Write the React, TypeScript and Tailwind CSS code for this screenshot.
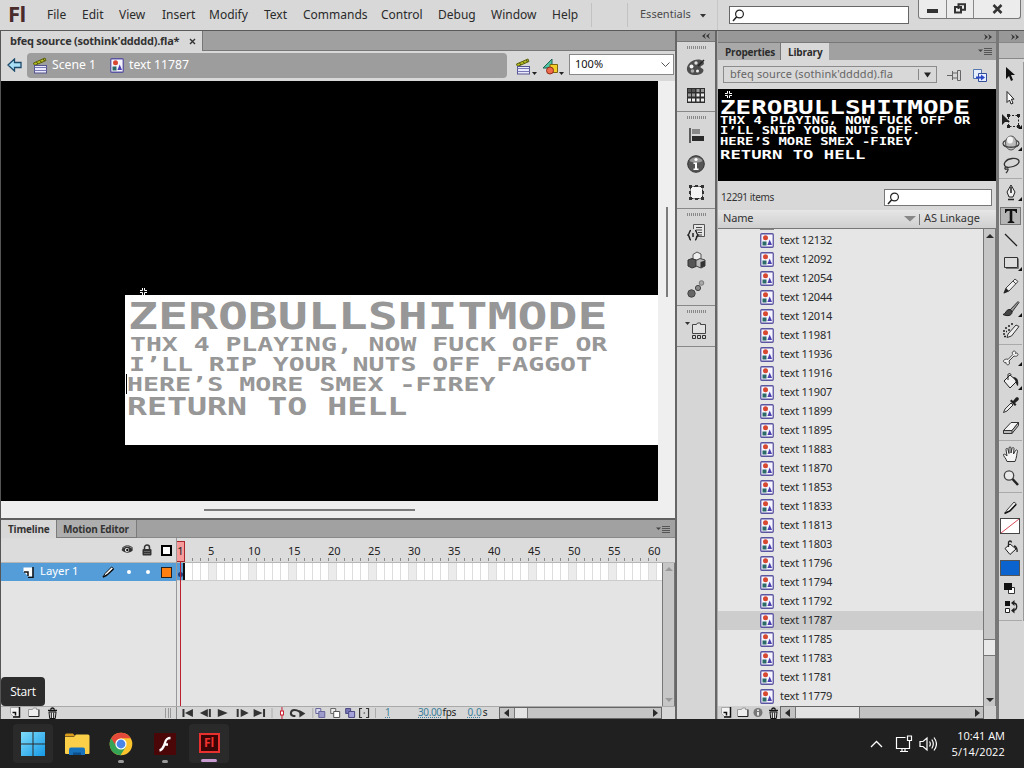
import React from 'react';
import clsx from 'clsx';

const MENU = [
  { label: 'File', cell: 'w-[35px]' },
  { label: 'Edit', cell: 'w-[37px]' },
  { label: 'View', cell: 'w-[43px]' },
  { label: 'Insert', cell: 'w-[47px]' },
  { label: 'Modify', cell: 'w-[55px]' },
  { label: 'Text', cell: 'w-[39px]' },
  { label: 'Commands', cell: 'w-[78px]' },
  { label: 'Control', cell: 'w-[57px]' },
  { label: 'Debug', cell: 'w-[53px]' },
  { label: 'Window', cell: 'w-[61px]' },
  { label: 'Help', cell: 'w-[39px]' },
];

const ITEMS = [
  12132, 12092, 12054, 12044, 12014, 11981, 11936, 11916, 11907, 11899, 11895, 11883, 11870,
  11853, 11833, 11813, 11803, 11796, 11794, 11792, 11787, 11785, 11783, 11781, 11779,
];

type SvgProps = { w: number; h: number; className?: string; children: React.ReactNode };

function Svg({ w, h, className, children }: SvgProps) {
  return (
    <svg width={w} height={h} viewBox={`0 0 ${w} ${h}`} fill="none" className={clsx('block shrink-0', className)}>
      {children}
    </svg>
  );
}

/* ---------- small shared icons ---------- */

function SymbolIcon() {
  return (
    <Svg w={14} h={15}>
      <rect x="0.75" y="0.75" width="12.5" height="13.5" rx="1" fill="#f6f4ff" stroke="#5a55a0" strokeWidth="1.3" />
      <circle cx="5.5" cy="4.8" r="2.5" fill="#d8472f" />
      <rect x="2.5" y="8.5" width="4" height="4" fill="#2a6b68" />
      <path d="M9.7 6.5 12 12H7.4z" fill="#4a41ad" />
    </Svg>
  );
}

function Clapper() {
  return (
    <Svg w={17} h={17}>
      <path d="M1.500 6 13 1l1 2.500-11.500 5z" fill="#b6bd1e" stroke="#5b5f12" />
      <path d="m4.500 5 1.500 2M8 3.500l1.500 2M11.300 2 12.500 4" stroke="#4a4d10" />
      <rect x="2.500" y="8.500" width="12" height="7.500" fill="#e9e9fb" stroke="#55558f" />
      <path d="M2.500 10.500h12M2.500 13.500h12" stroke="#7777b8" />
    </Svg>
  );
}

function Magnifier() {
  return (
    <Svg w={13} h={13}>
      <circle cx="7.500" cy="5" r="3.900" stroke="#222" strokeWidth="1.200" />
      <path d="M4.700 7.800 1 12" stroke="#222" strokeWidth="1.500" />
    </Svg>
  );
}

function Chevrons({ left }: { left?: boolean }) {
  return (
    <Svg w={8} h={6} className={left ? 'rotate-180' : ''}>
      <path d="M0 0 4 3 0 6 1.500 3zM4 0l4 3-4 3 1.500-3z" fill="#333" />
    </Svg>
  );
}

function PanelMenu() {
  return (
    <Svg w={14} h={8}>
      <path d="M0 1.500h5L2.500 4z" fill="#444" />
      <path d="M6 .5h8M6 2.500h8M6 4.500h8M6 6.500h8" stroke="#555" />
    </Svg>
  );
}

function NewItem() {
  return (
    <Svg w={11} h={11}>
      <path d="M.5.500h9v9h-6l-3-3z" fill="#f3f3f3" stroke="#aaa" />
      <path d="M9.500 0v10H3M2.500 5.500h3v3M5.500 8.500v-3" stroke="#111" strokeWidth="1.500" />
    </Svg>
  );
}

function FolderItem() {
  return (
    <Svg w={12} h={11}>
      <path d="M.5 2.500h4l1-1.500h3v1.500h2v7H.500z" fill="#eee" stroke="#999" />
      <path d="M1 9.500h10v-7" stroke="#222" />
    </Svg>
  );
}

function Trash() {
  return (
    <Svg w={11} h={12}>
      <path d="M1 3.500h9M3.500 2.500c1-2 3-2 4 0" stroke="#111" strokeWidth="1.300" />
      <path d="M2 5h7l-.7 6.500H2.700z" fill="#eee" stroke="#111" />
      <path d="M4.300 5.500v5.500M6.700 5.500v5.500" stroke="#111" />
    </Svg>
  );
}

function RegMark() {
  return (
    <Svg w={8} h={8}>
      <path d="M2.500 0v2.500H0M4.500 0v2.500H7M2.500 7V4.500H0M4.500 7V4.500H7" stroke="#fff" />
    </Svg>
  );
}

/* ---------- top bar ---------- */

function MenuBar() {
  return (
    <div className="flex h-[31px] shrink-0 border-b border-[#5a5a5a] bg-[#d8d8d8] text-[12px] leading-[30px] text-[#2a2a2a]">
      <div className="w-[47px] pl-[8px] font-['Open_Sans'] text-[22px] font-bold leading-[27px] tracking-[-0.5px] text-[#4a2b2b]">Fl</div>
      {MENU.map((m) => (
        <div key={m.label} className={m.cell}>
          {m.label}
        </div>
      ))}
      <div className="mt-[3px] h-6 w-[37px] border-x border-[#c2c2c2]" />
      <div className="flex w-[90px] border-r border-[#c6c6c6] pl-[12px] text-[11px] leading-[28px] text-[#4a4a4a]">
        Essentials
        <Svg w={6} h={4} className="ml-[9px] mt-[14px]">
          <path d="M0 0h6L3 3.500z" fill="#333" />
        </Svg>
      </div>
      <div className="ml-[11px] mt-[6px] h-[18px] w-[180px] border border-[#666] bg-white pl-[2px] pt-[2px]">
        <Magnifier />
      </div>
      <div className="ml-[9px] flex h-[19px] w-[103px] rounded-b-[3px] border border-t-0 border-[#777] bg-[#ececec]">
        <div className="flex w-[28px] justify-center border-r border-[#888] pt-[9px]">
          <div className="h-[4px] w-[11px] bg-[#333]" />
        </div>
        <div className="flex w-[27px] justify-center border-r border-[#888] pt-[3px]">
          <Svg w={12} h={11}>
            <path d="M4.500 6V1.200h6.500v5.500H8" stroke="#333" strokeWidth="2" />
            <rect x="1" y="4" width="6" height="5.500" stroke="#333" strokeWidth="2" />
          </Svg>
        </div>
        <div className="flex flex-1 justify-center pt-[4px]">
          <Svg w={11} h={10}>
            <path d="m1.500 1 8 8M9.500 1l-8 8" stroke="#333" strokeWidth="2.500" />
          </Svg>
        </div>
      </div>
    </div>
  );
}

/* ---------- document ---------- */

function EditBar() {
  return (
    <div className="flex h-[30px] shrink-0 bg-[#d8d8d8] pt-[2px]">
      <Svg w={16} h={14} className="ml-[6px] mt-[5px]">
        <path d="M1 7 7.500 1v3.500H14v5H7.500V13z" fill="#a9def5" stroke="#1c4a6b" strokeWidth="1.300" />
      </Svg>
      <div className="ml-[4px] flex h-[25px] w-[480px] items-center rounded-[4px] bg-[#9d9d9d] pl-[5px] text-[12.200px] text-white">
        <Clapper />
        <span className="ml-[3px] w-[56px] whitespace-nowrap">Scene 1</span>
        <span className="ml-[2px]">
          <SymbolIcon />
        </span>
        <span className="ml-[5px] whitespace-nowrap">text 11787</span>
      </div>
      <div className="ml-[8px] mt-[4px] flex h-[18px] w-[27px] items-end">
        <Clapper />
        <Svg w={5} h={3}>
          <path d="M0 0h5L2.500 3z" fill="#222" />
        </Svg>
      </div>
      <div className="mt-[4px] flex h-[18px] w-[27px] items-end">
        <Svg w={17} h={17}>
          <path d="M10 1v9H1z" fill="#4cc3a2" stroke="#1e6354" />
          <path d="M8 6.500h7.500v8H8z" fill="#f2cf27" stroke="#7c6410" />
          <circle cx="8" cy="12.500" r="3.500" fill="#ee6a4a" stroke="#8f2f1d" />
        </Svg>
        <Svg w={5} h={3}>
          <path d="M0 0h5L2.500 3z" fill="#222" />
        </Svg>
      </div>
      <div className="mt-[1px] flex h-[21px] w-[105px] items-center justify-between border border-[#888] bg-white pl-[5px] pr-[3px] text-[11px] text-[#111]">
        100%
        <Svg w={9} h={5}>
          <path d="m.5.500 4 4 4-4" stroke="#555" />
        </Svg>
      </div>
    </div>
  );
}

const PIXEL = "origin-left whitespace-pre font-['DejaVu_Sans_Mono'] font-bold";

function Stage() {
  return (
    <div className="flex h-[420px] shrink-0">
      <div className="relative w-[657px] overflow-hidden bg-black">
        <div className="absolute left-[139px] top-[207px]">
          <RegMark />
        </div>
        <div className="absolute left-[124px] top-[214px] h-[150px] w-[533px] bg-white text-[#979797]">
          <div className="absolute left-[1px] top-[79px] h-[20px] w-px bg-black" />
          <div className={clsx(PIXEL, 'ml-[3px] mt-[3px] h-[37px] scale-x-[1.345] text-[37px] leading-[38px]')}>ZEROBULLSHITMODE</div>
          <div className={clsx(PIXEL, 'ml-[5px] h-[20px] scale-x-[1.355] text-[19.500px] leading-[20px]')}>THX 4 PLAYING, NOW FUCK OFF OR</div>
          <div className={clsx(PIXEL, 'ml-[4px] h-[20px] scale-x-[1.36] text-[19.500px] leading-[20px]')}>I’LL RIP YOUR NUTS OFF FAGGOT</div>
          <div className={clsx(PIXEL, 'ml-[2px] h-[20px] scale-x-[1.365] text-[19.500px] leading-[20px]')}>HERE’S MORE SMEX -FIREY</div>
          <div className={clsx(PIXEL, 'ml-[2px] h-[24px] scale-x-[1.33] text-[25px] leading-[24px]')}>RETURN TO HELL</div>
        </div>
      </div>
      <div className="flex-1 bg-[#efefef] pl-[8px] pt-[126px]">
        <div className="h-[90px] w-[2px] bg-[#7c7c7c]" />
      </div>
    </div>
  );
}

/* ---------- timeline ---------- */

function Ruler() {
  const labels = Array.from({ length: 12 }, (_, i) => (i + 1) * 5);
  return (
    <div className="relative flex h-[25px] flex-1 overflow-hidden border-l border-[#999] text-[11px] text-[#222]">
      <div className="absolute -left-[1px] top-[3px] h-[21px] w-[9px] border border-[#a8262c] bg-[#f79a9a] text-center leading-[18px]">1</div>
      <div className="ml-[31px] flex">
        {labels.map((n) => (
          <div key={n} className="w-[40px] shrink-0 pt-[4px] leading-[18px]">
            {n}
          </div>
        ))}
      </div>
      <div className="absolute bottom-[2px] left-[15px] flex">
        {Array.from({ length: 59 }, (_, i) => (
          <div key={i} className="h-[3px] w-[8px] shrink-0 border-l border-[#888]" />
        ))}
      </div>
    </div>
  );
}

function ScrollArrow({ d, dim }: { d: string; dim?: boolean }) {
  return (
    <Svg w={8} h={8}>
      <path d={d} fill={dim ? '#999' : '#2a2a2a'} />
    </Svg>
  );
}

const LEFT = 'M6 0v8L1 4z';
const RIGHT = 'M2 0v8l5-4z';
const UP = 'M0 6h8L4 2z';
const DOWN = 'M0 2h8L4 6z';

function Timeline() {
  return (
    <div className="flex flex-1 flex-col border-t-2 border-[#606060] bg-[#e4e4e4]">
      <div className="flex h-[18px] shrink-0 bg-[#a1a1a1] font-['Open_Sans'] text-[10px] font-bold leading-[18px] tracking-[-0.2px] text-[#333]">
        <div className="w-[55px] bg-[#d8d8d8] pl-[7px]">Timeline</div>
        <div className="w-[81px] whitespace-nowrap border-x border-b border-[#7b7b7b] bg-[#aeaeae] pl-[6px]">Motion Editor</div>
        <div className="flex-1 border-b border-[#888]" />
        <div className="w-[19px] border-b border-[#888] pt-[6px]">
          <PanelMenu />
        </div>
      </div>
      <div className="flex h-[25px] shrink-0 border-b border-[#b5b5b5] bg-[#dcdcdc]">
        <div className="flex w-[175px] items-center pl-[120px]">
          <Svg w={13} h={10}>
            <path d="M.5 5C3 1 9.500.500 12 5c-3 3.500-8 3.500-11.500 0z" fill="#333" />
            <path d="M1 3.500C4 0 9 0 12 3.500" stroke="#222" />
            <circle cx="6" cy="5" r="2" fill="#fff" />
            <circle cx="6.300" cy="5" r="1.200" fill="#111" />
          </Svg>
          <Svg w={10} h={12} className="ml-[8px]">
            <path d="M2.500 5.500V3.500a2.500 2.500 0 0 1 5 0v2" stroke="#333" strokeWidth="1.500" />
            <rect x="0.500" y="5" width="9" height="6.500" rx="1" fill="#333" />
            <path d="M2 7.500h6M2 9.500h6" stroke="#666" />
          </Svg>
          <div className="ml-[9px] h-[11px] w-[11px] shrink-0 border-2 border-black bg-white" />
        </div>
        <Ruler />
        <div className="w-[14px]" />
      </div>
      <div className="flex flex-1">
        <div className="flex w-[175px] flex-col">
          <div className="flex h-[18px] items-center bg-[#559dd8] pl-[22px] text-[11px] text-white">
            <Svg w={11} h={11}>
              <path d="M.5.500h9v9h-4l-5-5z" fill="#fff" />
              <path d="M10 0v10.500H5M1 5h4v4" stroke="#111" strokeWidth="1.500" />
            </Svg>
            <span className="ml-[6px] w-[62px] pb-[2px] text-[11.300px]">Layer 1</span>
            <Svg w={13} h={12}>
              <path d="M1 11 3 7.500 9.500 1l2 1.500L5 9z" fill="#fff" stroke="#111" />
              <path d="M1 11.200 5 9M5 9l6.500-6" stroke="#111" strokeWidth="1.500" />
            </Svg>
            <div className="ml-[12px] h-[4px] w-[4px] rounded-full bg-white" />
            <div className="ml-[15px] h-[4px] w-[4px] rounded-full bg-white" />
            <div className="ml-[11px] h-[11px] w-[11px] border border-[#222] bg-[#ff8010]" />
          </div>
        </div>
        <div className="relative flex-1 border-l border-[#999]">
          <div className="flex h-[18px] overflow-hidden border-b border-[#ccc] bg-white">
            <div className="flex w-[8px] shrink-0 items-end justify-center border-r-2 border-[#111] bg-[#559dd8] pb-[3px]">
              <div className="h-[5px] w-[5px] rounded-full bg-[#243c78]" />
            </div>
            {Array.from({ length: 59 }, (_, i) => (
              <div key={i} className={clsx('w-[8px] shrink-0 border-r border-[#ddd]', (i + 2) % 5 === 0 && 'bg-[#ebebeb]')} />
            ))}
          </div>
          <div className="absolute -top-[1px] bottom-0 left-[3px] w-px bg-[#bb2030]" />
        </div>
        <div className="flex w-[13px] flex-col items-center justify-between border-x border-[#777] bg-[#c6c6c6] py-[2px]">
          <ScrollArrow d={UP} dim />
          <ScrollArrow d={DOWN} dim />
        </div>
      </div>
      <div className="flex h-[13px] shrink-0 border-t border-[#aaa] bg-[#d6d6d6]">
        <div className="flex w-[175px] pl-[9px]">
          <NewItem />
          <div className="ml-[7px]">
            <FolderItem />
          </div>
          <div className="ml-[7px]">
            <Trash />
          </div>
          <div className="ml-auto mr-[5px] mt-px h-[10px] w-[6px] border-x border-[#999] pl-[2px]">
            <div className="h-[10px] w-px bg-[#999]" />
          </div>
        </div>
        <Svg w={201} h={12} className="border-l border-[#888]">
          <path d="M95.500 1v10M136.500 1v10M199.500 1v10" stroke="#aaa" />
          <path d="M6.500 2v8" stroke="#333" strokeWidth="2" />
          <path d="M16 2v8L8 6zM31 2v8l-8-4zM41 2v8l10-4zM64 2v8l8-4zM77 2v8l9-4z" fill="#333" />
          <path d="M33 2v8M61 2v8M87.500 2v8" stroke="#333" strokeWidth="2" />
          <path d="M105.500 0v12" stroke="#c81e30" />
          <rect x="104" y="4" width="3" height="4" fill="#fff" stroke="#c81e30" />
          <path d="M119 9h-2c-4-1-3-6 1-6 4 0 4 1.500 7 3" stroke="#333" strokeWidth="2" />
          <path d="M123 3 129 6.500l-6 4z" fill="#333" />
          <path d="M139.500 1.500h5v5h-5z" fill="#d9d9ef" stroke="#666699" />
          <path d="M142.500 4.500h6v6h-6z" fill="#9d9ccc" stroke="#666699" />
          <path d="M154.500 1.500h5v5h-5z" fill="#eee" stroke="#666" />
          <path d="M157.500 4.500h6v6h-6z" fill="#fff" stroke="#555" />
          <path d="M169.500 1.500h5v5h-5z" fill="#7775b7" stroke="#4b4a82" />
          <path d="M172.500 4.500h6v6h-6z" fill="#a4a2d8" stroke="#4b4a82" />
          <path d="M186 1.500h-2.500v9h2.500M190 1.500h2.500v9H190M187.500 6h1.500" stroke="#333" strokeWidth="1.200" />
        </Svg>
        <div className="flex w-[122px] text-[10px] leading-[11px] text-[#3d7f9c]">
          <span className="ml-[8px] w-[33px] underline decoration-dotted underline-offset-1">1</span>
          <span className="tracking-[-0.4px] underline decoration-dotted underline-offset-1">30.00</span>
          <span className="ml-px w-[25px] tracking-[-0.3px] text-[#222]">fps</span>
          <span className="underline decoration-dotted underline-offset-1">0.0</span>
          <span className="ml-px text-[#222]">s</span>
        </div>
        <div className="flex flex-1 items-center border border-[#666] bg-[#c4c4c4]">
          <div className="flex w-[14px] justify-center">
            <ScrollArrow d={LEFT} />
          </div>
          <div className="h-full w-[14px] border-x border-[#777] bg-[#e4e4e4]" />
          <div className="ml-auto mr-[2px]">
            <ScrollArrow d={RIGHT} />
          </div>
        </div>
        <div className="w-[13px]" />
      </div>
    </div>
  );
}

/* ---------- collapsed icon dock ---------- */

function Grip() {
  return (
    <div className="flex h-[12px] shrink-0 justify-center gap-px pt-[4px]">
      {Array.from({ length: 10 }, (_, i) => (
        <div key={i} className="h-[3px] w-px bg-[#888]" />
      ))}
    </div>
  );
}

function Slot({ h, children }: { h: string; children: React.ReactNode }) {
  return <div className={clsx('flex shrink-0 items-center justify-center', h)}>{children}</div>;
}

function Dock() {
  return (
    <div className="flex w-[42px] shrink-0 flex-col border-x-2 border-[#666] bg-[#d6d6d6]">
      <div className="flex h-[11px] shrink-0 items-center justify-end border-b border-[#777] bg-[#989898] pr-[5px]">
        <Chevrons left />
      </div>
      <Grip />
      <Slot h="h-[26px]">
        <Svg w={20} h={18}>
          <path d="M1 12C0 6 7 1 13 1.500c4 .5 6 3 4.500 5-1 1.500-3 1-3 2.500s3 1 3 3.500c-1 4-6 5-10 4.500-3-.3-6-2-6.500-5z" fill="#4d4d4d" />
          <circle cx="5.500" cy="8.500" r="2" fill="#f2f2f2" />
          <circle cx="10" cy="5" r="1.700" fill="#ddd" />
          <circle cx="6.500" cy="13" r="1.800" fill="#aaa" />
          <circle cx="11.500" cy="13" r="1.500" fill="#eee" />
          <path d="M12 8 18 2" stroke="#222" strokeWidth="1.500" />
        </Svg>
      </Slot>
      <Slot h="h-[30px]">
        <Svg w={18} h={15}>
          <path d="M0 0h18v15H0z" fill="#2e2e2e" />
          <path d="M1 1h3v3H1zM5 1h3v3H5z" fill="#555" />
          <path d="M9.500 1h3v3h-3zM14 1h3v3h-3zM5 5.500h3v3H5zM1 5.500h3v3H1z" fill="#999" />
          <path d="M9.500 5.500h3v3h-3zM14 5.500h3v3h-3zM1 10.500h3v3H1zM5 10.500h3v3H5zM9.500 10.500h3v3h-3zM14 10.500h3v3h-3z" fill="#eee" />
        </Svg>
      </Slot>
      <div className="mt-px h-px shrink-0 bg-[#888]" />
      <Grip />
      <Slot h="h-[22px]">
        <Svg w={17} h={15}>
          <path d="M2 0v15" stroke="#333" strokeWidth="1.500" />
          <path d="M4 1h8v5H4z" fill="#888" />
          <path d="M4 8h12v5H4z" fill="#2a2a2a" />
        </Svg>
      </Slot>
      <Slot h="h-[35px]">
        <Svg w={18} h={18}>
          <circle cx="9" cy="9" r="8.300" fill="#555" stroke="#333" />
          <path d="M2.500 6C5 1 13 1 15.500 6 12 8 6 8 2.500 6z" fill="#999" />
          <circle cx="9" cy="4.500" r="1.600" fill="#fff" />
          <path d="M6.500 7.500H10v6h1.500V15h-5v-1.500H8V9H6.500z" fill="#fff" />
        </Svg>
      </Slot>
      <Slot h="h-[22px]">
        <Svg w={17} h={17}>
          <path d="M2.500 2.500h12v12h-12z" fill="#f4f4f4" stroke="#222" strokeDasharray="2 1" />
          <path d="M1 1h3v3H1zM13 1h3v3h-3zM1 13h3v3H1zM13 13h3v3h-3zM7 1h3v2H7zM7 14h3v2H7zM1 7h2v3H1zM14 7h2v3h-2z" fill="#333" />
        </Svg>
      </Slot>
      <div className="mt-[5px] h-px shrink-0 bg-[#888]" />
      <Grip />
      <Slot h="h-[22px]">
        <Svg w={19} h={19}>
          <path d="M6.500 1.500h11v12H9M6.500 1.500V6" fill="#e6e6e6" stroke="#555" />
          <path d="M9 4.500h6M9 7h6M11 9.500h4M11 12h4" stroke="#444" />
          <path d="M4 7.500c-2 0-1 3-3 4.500 2 1 1 5 3 5M8 7.500c2 0 1 3 3 4.500-2 1-1 5-3 5M6 10v4" stroke="#222" strokeWidth="1.500" />
        </Svg>
      </Slot>
      <Slot h="h-[34px]">
        <Svg w={19} h={18}>
          <path d="M6 3.500 10 1l4 2v6H6z" fill="#eee" stroke="#555" />
          <path d="M1 9l4-1.500L9 9v6.500L5 17l-4-2z" fill="#555" stroke="#333" />
          <path d="M9 9.500l4-2L18 9v6l-4 2-5-2z" fill="#bbb" stroke="#444" />
          <path d="M13.500 11 18 9.500V15l-4.500 2z" fill="#333" />
        </Svg>
      </Slot>
      <Slot h="h-[23px]">
        <Svg w={18} h={18}>
          <circle cx="4.500" cy="13.500" r="3.700" fill="#666" stroke="#444" />
          <circle cx="11" cy="8" r="2.600" fill="#8a8a8a" stroke="#444" />
          <circle cx="14.500" cy="3" r="2.300" fill="#aaa" stroke="#777" />
        </Svg>
      </Slot>
      <div className="mt-[5px] h-px shrink-0 bg-[#888]" />
      <Grip />
      <Slot h="h-[25px]">
        <Svg w={22} h={18}>
          <path d="M0 0h5L2.500 3z" fill="#333" />
          <path d="M7.500 11.500V2.500h4l1-1.500h3v1.500h5v9z" fill="#e2e2e2" stroke="#444" />
          <path d="M7.500 13.500h3v3h-3zM12.500 13.500h3v3h-3zM17.500 13.500h3v3h-3z" stroke="#333" />
        </Svg>
      </Slot>
      <div className="mt-[3px] h-px shrink-0 bg-[#888]" />
    </div>
  );
}

/* ---------- library ---------- */

function Library() {
  return (
    <div className="flex w-[278px] shrink-0 flex-col bg-[#d8d8d8]">
      <div className="flex h-[11px] shrink-0 items-center justify-end bg-[#989898] pr-[4px]">
        <Chevrons />
      </div>
      <div className="flex h-[18px] shrink-0 border-t border-[#777] bg-[#a1a1a1] font-['Open_Sans'] text-[10px] font-bold leading-[18px] tracking-[-0.2px] text-[#2c2c2c]">
        <div className="w-[63px] border-r border-[#777] bg-[#a9a9a9] pl-[7px]">Properties</div>
        <div className="w-[48px] bg-[#d8d8d8] pl-[7px]">Library</div>
        <div className="ml-auto mr-[4px] mt-[5px]">
          <PanelMenu />
        </div>
      </div>
      <div className="flex h-[29px] shrink-0 pt-[6px]">
        <div className="ml-[5px] flex h-[17px] w-[214px] border border-[#8b8b8b] pl-[6px] text-[11px] leading-[13px] text-[#666]">
          <span className="flex-1 whitespace-nowrap tracking-[0.1px]">bfeq source (sothink'ddddd).fla</span>
          <div className="my-[2px] flex w-[18px] items-center justify-center border-l border-[#888]">
            <Svg w={7} h={6}>
              <path d="M0 .5h7L3.500 5.500z" fill="#222" />
            </Svg>
          </div>
        </div>
        <Svg w={15} h={14} className="ml-[10px] mt-[2px]">
          <path d="M0 7.500h5M5.500 3v9M5.500 5h5M5.500 10h5M10.500 2.500v10h3v-10z" stroke="#666" />
        </Svg>
        <Svg w={15} h={14} className="ml-[11px] mt-[3px]">
          <path d="M.5.500h8v9h-8z" fill="#e6efff" stroke="#5577aa" />
          <path d="M5.500 4.500h8v8h-8z" fill="#e6efff" stroke="#334d99" />
          <path d="M3 7.500h5V5.500L12 8.500 8 11.500V9.500H3z" fill="#2b49c6" />
        </Svg>
      </div>
      <div className="relative h-[92px] shrink-0 overflow-hidden bg-black text-white">
        <div className="absolute left-[7px] top-[2px]">
          <RegMark />
        </div>
        <div className={clsx(PIXEL, 'ml-[2px] mt-[8px] h-[18px] scale-x-[1.365] text-[19px] leading-[20px]')}>ZEROBULLSHITMODE</div>
        <div className={clsx(PIXEL, 'ml-[2px] h-[10px] scale-x-[1.25] text-[11.100px] leading-[12px]')}>THX 4 PLAYING, NOW FUCK OFF OR</div>
        <div className={clsx(PIXEL, 'ml-[2px] h-[11px] scale-x-[1.25] text-[11.100px] leading-[12px]')}>I’LL SNIP YOUR NUTS OFF.</div>
        <div className={clsx(PIXEL, 'ml-[2px] h-[12px] scale-x-[1.25] text-[11.100px] leading-[12px]')}>HERE’S MORE SMEX -FIREY</div>
        <div className={clsx(PIXEL, 'ml-[2px] h-[13px] scale-x-[1.38] text-[12.500px] leading-[14px]')}>RETURN TO HELL</div>
      </div>
      <div className="flex h-[29px] shrink-0 justify-between pl-[3px] pr-[4px] pt-[8px] text-[10px] text-[#333]">
        <span className="leading-[17px] tracking-[-0.4px]">12291 items</span>
        <div className="h-[17px] w-[108px] border border-[#777] bg-white pl-[2px] pt-[2px]">
          <Magnifier />
        </div>
      </div>
      <div className="flex h-[19px] shrink-0 items-center border-b border-[#777] bg-gradient-to-b from-[#e6e6e6] to-[#cfcfcf] pl-[5px] text-[11px] text-[#333]">
        <span className="w-[181px] pb-[2px] tracking-[-0.2px]">Name</span>
        <Svg w={12} h={6}>
          <path d="M0 0h12L6 5.500z" fill="#888" />
        </Svg>
        <div className="ml-[3px] h-[11px] w-px bg-[#777]" />
        <span className="ml-[4px] whitespace-nowrap pb-[2px] tracking-[-0.05px]">AS Linkage</span>
      </div>
      <div className="flex min-h-0 flex-1 bg-[#e6e6e6]">
        <div className="flex-1">
          <div className="h-[2px] pl-[42px]">
            <div className="h-px w-[14px] bg-[#888]" />
          </div>
          {ITEMS.map((id) => (
            <div key={id} className={clsx('flex h-[19px] items-center pl-[42px] text-[11px] text-[#2b2b2b]', id === 11787 && 'bg-[#cdcdcd]')}>
              <SymbolIcon />
              <span className="ml-[6px] pb-[2px] leading-[17px] tracking-[-0.2px]">text {id}</span>
            </div>
          ))}
        </div>
        <div className="flex w-[13px] flex-col items-center border-x border-[#777] bg-[#c6c6c6] pb-[2px] pt-[3px]">
          <ScrollArrow d={UP} />
          <div className="mt-[399px] h-[17px] w-[11px] border-y border-[#777] bg-[#e9e9e9]" />
          <div className="mt-auto">
            <ScrollArrow d={DOWN} />
          </div>
        </div>
      </div>
      <div className="flex h-[13px] shrink-0 items-center bg-[#d0d0d0] pl-[3px]">
        <NewItem />
        <div className="ml-[5px]">
          <FolderItem />
        </div>
        <Svg w={10} h={11} className="ml-[4px]">
          <circle cx="5" cy="5.500" r="4.500" fill="#777" />
          <path d="M5 5v3.500M5 2.500v1.500" stroke="#fff" strokeWidth="1.600" />
        </Svg>
        <div className="ml-[5px]">
          <Trash />
        </div>
        <div className="ml-px flex h-full w-[204px] items-center border border-[#666] bg-[#c2c2c2]">
          <div className="flex w-[14px] justify-center">
            <ScrollArrow d={LEFT} />
          </div>
          <div className="h-full w-[65px] border-x border-[#777] bg-[#e2e2e2]" />
          <div className="ml-auto mr-[2px]">
            <ScrollArrow d={RIGHT} />
          </div>
        </div>
      </div>
    </div>
  );
}

/* ---------- tools ---------- */

function Tool({ h, more, on, children }: { h: string; more?: boolean; on?: boolean; children: React.ReactNode }) {
  return (
    <div className={clsx('relative flex shrink-0 items-center justify-center', h)}>
      {on && <div className="absolute inset-x-[1px] inset-y-[3px] border border-[#777] bg-[#b5b5b5]" />}
      <Svg w={18} h={18} className="relative">
        {children}
      </Svg>
      {more && (
        <Svg w={4} h={4} className="absolute bottom-[3px] right-0">
          <path d="M4 0v4H0z" fill="#111" />
        </Svg>
      )}
    </div>
  );
}

function Line({ m }: { m: string }) {
  return <div className={clsx('h-px shrink-0 bg-[#aaa]', m)} />;
}

function Tools() {
  return (
    <div className="flex flex-1 flex-col border-l-[3px] border-[#777] bg-[#d6d6d6]">
      <div className="flex h-[11px] shrink-0 items-center justify-end bg-[#989898] pr-[5px]">
        <Chevrons />
      </div>
      <div className="mb-[3px] h-[17px] shrink-0 border-y border-[#888] bg-[#bcbcbc]" />
      <div className="flex flex-col border-r border-[#999] pr-px">
        <Tool h="h-[24px]">
          <path d="M4 2v12l3-3 2 5 2-1-2-5h4z" fill="#111" />
        </Tool>
        <Tool h="h-[23px]">
          <path d="M5 2.500v11l2.500-2.500 1.500 4 2-.8-1.600-4H12z" fill="#fff" stroke="#222" />
        </Tool>
        <Tool h="h-[23px]" more>
          <path d="M6.500 3.500h10v11h-10z" stroke="#222" strokeDasharray="2 1.500" />
          <path d="M5 2h3v3H5zM15 2h3v3h-3zM15 13h3v3h-3zM5 13h3v3H5z" fill="#222" />
          <path d="M0 2v11l3-3h5z" fill="#222" />
        </Tool>
        <Tool h="h-[22px]" more>
          <ellipse cx="9" cy="9.500" rx="8" ry="4" stroke="#444" strokeWidth="1.300" />
          <ellipse cx="9" cy="9" rx="5.500" ry="7" fill="#bbb" stroke="#555" />
          <ellipse cx="8" cy="6" rx="3" ry="3.500" fill="#f3f3f3" />
          <path d="M1.500 11c3 3 12 3 15 0" stroke="#444" strokeWidth="1.300" />
        </Tool>
        <Tool h="h-[22px]">
          <path d="M4 11C0 8 4 3 10 2.500c6-.5 8 2 6.500 4.500C15 10 8 12 4 11c-2 1-1 3 1 2s1 2-1 4" stroke="#333" strokeWidth="1.300" />
        </Tool>
        <Line m="mt-[2px] mb-[2px]" />
        <Tool h="h-[23px]" more>
          <path d="M9 1 13 8l-2 5H7L5 8z" fill="#eee" stroke="#222" />
          <path d="M9 3v6M6 15.500h6" stroke="#222" strokeWidth="1.500" />
        </Tool>
        <Tool h="h-[24px]" on>
          <path d="M3 2h12v4h-1c-.3-1.500-1-2.300-3.700-2.300V14l2 1v1H5.700v-1l2-1V3.700C5 3.700 4.300 4.500 4 6H3z" fill="#111" />
        </Tool>
        <Tool h="h-[23px]">
          <path d="m3 3 12 12" stroke="#222" strokeWidth="1.300" />
        </Tool>
        <Tool h="h-[23px]" more>
          <path d="M2.500 3.500h13v10h-13z" fill="#dcdcdc" stroke="#333" />
          <path d="M16.500 4.500v10H4" stroke="#777" />
        </Tool>
        <Tool h="h-[23px]">
          <path d="M2 16 4 11l9-9 3 2.500-9 9.500z" fill="#eee" stroke="#444" />
          <path d="M1.500 16.500 4 11l3 3z" fill="#222" />
          <path d="m11 4 3 3" stroke="#444" />
        </Tool>
        <Tool h="h-[23px]" more>
          <path d="M8 10 16 1.500l1 1L10 12z" fill="#999" stroke="#333" />
          <path d="M1 14.500c3-.5 3-5 6-5 3 0 4 3 2 5s-6 1-8 0z" fill="#444" stroke="#222" />
        </Tool>
        <Tool h="h-[22px]">
          <path d="M6 12 14 3l3 1.500L9.500 14 5 15.500z" fill="#eee" stroke="#333" />
          <path d="M1 9h2M3 6h2M6 4h2M9 2h2M1 12h2M6 8h2M4 9.500h1M2 14.500h2" stroke="#222" strokeWidth="1.700" />
        </Tool>
        <Line m="mt-[2px] mb-px" />
        <Tool h="h-[23px]" more>
          <path d="M3 10.500c-3 1-1 4 1 3 0 3 3.500 3 3.500.5L7 12l5-5c3 1 5-1 3.500-2.500-.5-.5-1-.5-2 0 1-2-1.500-3.500-3-1.500-.7 1 .3 2 .3 2.500L6 10.500c-1-.7-2-.5-3 0z" fill="#f2f2f2" stroke="#444" />
        </Tool>
        <Tool h="h-[24px]" more>
          <path d="M2 9 8 3l7 6-7 7z" fill="#f0f0f0" stroke="#222" />
          <path d="M6 8V3c0-2 3-2 3 0" stroke="#222" />
          <path d="M11 5c4 0 6 3 5 9-2-1-2-4-3-6z" fill="#222" />
        </Tool>
        <Tool h="h-[23px]">
          <path d="M1.500 16.500 3 13l6-6 2 2-6 6z" fill="#eee" stroke="#333" />
          <path d="m8 5 1.500-1.500L11 5l3-3.500c2-1 3.500.5 2.500 2.500L13 7l1.500 1.500L13 10z" fill="#222" />
        </Tool>
        <Tool h="h-[23px]">
          <path d="M1.500 11.500 9 3.500h7.500L10 11.500z" fill="#f4f4f4" stroke="#333" />
          <path d="M1.500 11.500v3H10l6.500-8v-3L10 11.500z" fill="#bbb" stroke="#333" />
          <path d="M10 11.500v3" stroke="#333" />
        </Tool>
        <Line m="mt-px mb-px" />
        <Tool h="h-[24px]">
          <path d="M5 16.500C4 13 1 11 1.500 9.500c1-1 2.500.5 3.500 1.500L4 4.500c0-1.500 1.700-1.500 2 0l1 4V3c0-1.500 2-1.500 2 0v5l1-4.500c.4-1.500 2-1 2 0L11.500 9l2-3.500c1-1.200 2.200-.5 2 .8C14.500 9 15 12 13 16.500z" fill="#f5f5f5" stroke="#333" />
        </Tool>
        <Tool h="h-[24px]">
          <circle cx="7" cy="6.500" r="4.700" fill="#e9e9e9" stroke="#444" strokeWidth="1.300" />
          <path d="m10.500 10 5.500 6" stroke="#222" strokeWidth="2.500" />
        </Tool>
        <Line m="mt-[2px] mb-[3px]" />
        <Tool h="h-[21px]">
          <path d="M3 15 5 12l7-8 2.500 2-7 7z" fill="#eee" stroke="#444" />
          <path d="M2.500 15.500 8 13l6-6.500" stroke="#111" strokeWidth="1.500" />
        </Tool>
        <div className="ml-px mt-px h-[16px] w-[20px] shrink-0 border border-[#444] bg-white">
          <Svg w={18} h={14}>
            <path d="M0 14 18 0" stroke="#d64a5a" />
          </Svg>
        </div>
        <Tool h="h-[26px]">
          <path d="M3 10.500 8 6l6 5-6 5.500z" fill="#f0f0f0" stroke="#222" />
          <path d="M6.500 9V4.500c0-2 3-2 3 0M12 8c2 0 3.500 3 3 6" stroke="#222" strokeWidth="1.300" />
        </Tool>
        <div className="ml-px h-[16px] w-[20px] shrink-0 border border-[#555] bg-[#0a63cf]" />
        <Tool h="h-[24px]">
          <path d="M6.500 8.500h6v6h-6z" fill="#fff" stroke="#333" />
          <path d="M2 4h8v7H2z" fill="#111" />
        </Tool>
        <Tool h="h-[14px]">
          <path d="M3 3h5v5H3z" fill="#111" />
          <path d="M3.500 10.500h4v4h-4z" fill="#fff" stroke="#222" />
          <path d="M11 5c5 0 5 7 0 7.500" stroke="#222" strokeWidth="1.300" />
          <path d="M12.500 2v6L9 5zM12.500 9.500v6L9 12.500z" fill="#222" />
        </Tool>
        <Line m="mt-[6px]" />
      </div>
    </div>
  );
}

/* ---------- taskbar ---------- */

function Taskbar() {
  return (
    <div className="flex h-[49px] shrink-0 bg-[#202020] font-['Open_Sans'] text-white">
      <div className="ml-[13px] mt-[5px] flex h-[39px] w-[40px] items-center justify-center rounded-[4px] bg-[#2a2a2a]">
        <Svg w={24} h={24}>
          <defs>
            <linearGradient id="win" x1="0" y1="0" x2="24" y2="24" gradientUnits="userSpaceOnUse">
              <stop stopColor="#7fdcfb" />
              <stop offset="1" stopColor="#1599e6" />
            </linearGradient>
          </defs>
          <path d="M0 0h11.500v11.500H0zM12.500 0H24v11.500H12.500zM0 12.500h11.500V24H0zM12.500 12.500H24V24H12.500z" fill="url(#win)" />
        </Svg>
      </div>
      <Svg w={26} h={23} className="ml-[11px] mt-[14px]">
        <path d="M1 2a1.500 1.500 0 0 1 1.500-1.500H9l2.500 3H1z" fill="#d99b1c" />
        <path d="M1 4h9l2-2.500h12a1.500 1.500 0 0 1 1.500 1.500v17a1 1 0 0 1-1 1H2a1 1 0 0 1-1-1z" fill="#fbcf48" />
        <path d="M5 22v-5.500a2 2 0 0 1 2-2h12a2 2 0 0 1 2 2V22z" fill="#1672bd" />
        <path d="M9 22v-2.500h8V22z" fill="#0c4f8b" />
      </Svg>
      <div className="ml-[19px] flex w-[24px] flex-col items-center pt-[13px]">
        <Svg w={24} h={24}>
          <circle cx="12" cy="12" r="11.300" fill="#fbc42d" />
          <path d="M12 12 2.200 6.300A11.300 11.300 0 0 0 11.500 23.300L17 14.500z" fill="#35a455" />
          <path d="M2.200 6.300A11.300 11.300 0 0 1 21.800 6.300H12a5.700 5.700 0 0 0-5.200 7.500z" fill="#e5493a" />
          <circle cx="12" cy="12" r="5.600" fill="#fff" />
          <circle cx="12" cy="12" r="4.400" fill="#4a86e8" />
        </Svg>
        <div className="mt-[4px] h-[3px] w-[6px] rounded-full bg-[#9a9a9a]" />
      </div>
      <div className="ml-[21px] flex w-[22px] flex-col items-center pt-[14px]">
        <Svg w={22} h={22}>
          <rect width="22" height="22" rx="1" fill="#4b0608" />
          <path d="M16.500 5c-5.500 0-5 4.500-6.500 7.500-1.200 3-2 4.500-4.500 5M9.500 11.500h4.500" stroke="#fff" strokeWidth="2.300" />
        </Svg>
        <div className="mt-[5px] h-[3px] w-[6px] rounded-full bg-[#9a9a9a]" />
      </div>
      <div className="ml-[13px] mt-[5px] flex h-[39px] w-[40px] flex-col items-center rounded-[4px] bg-[#2a2a2a] pt-[9px]">
        <div className="h-[20px] w-[21px] border-2 border-[#e8312f] bg-[#3b0506] text-center text-[12px] font-bold leading-[16px] text-[#f0312f]">Fl</div>
        <div className="mt-[6px] h-[3px] w-[16px] shrink-0 rounded-full bg-[#c89bd0]" />
      </div>
      <Svg w={13} h={8} className="ml-[641px] mt-[21px]">
        <path d="m1 7 5.500-5.500L12 7" stroke="#fff" strokeWidth="1.300" />
      </Svg>
      <Svg w={18} h={18} className="ml-[12px] mt-[16px]">
        <path d="M10.500 2.500h-9v11h13V9M5 16.500h8M7 13.500v3M10 13.500v3" stroke="#fff" strokeWidth="1.200" />
        <path d="M12.500 1h4v4.500h-4zM14.500 5.500V9" stroke="#fff" strokeWidth="1.200" />
      </Svg>
      <Svg w={18} h={16} className="ml-[6px] mt-[17px]">
        <path d="M1 5.500h3l4-3.500v12l-4-3.500H1z" stroke="#fff" strokeWidth="1.200" />
        <path d="M10.500 5.500c1 1.500 1 3.500 0 5M12.800 3.500c2 3 2 6 0 9M15 1.500c3 4 3 9 0 13" stroke="#fff" strokeWidth="1.200" />
      </Svg>
      <div className="ml-auto mr-[19px] pt-[9px] text-right text-[11px] leading-[16px]">
        <div>10:41 AM</div>
        <div className="tracking-[0.15px]">5/14/2022</div>
      </div>
    </div>
  );
}

export default function App() {
  return (
    <div className="relative flex h-[768px] w-[1024px] flex-col overflow-hidden bg-[#d6d6d6] font-['Noto_Sans',sans-serif]">
      <MenuBar />
      <div className="flex min-h-0 flex-1">
        <div className="flex w-[675px] shrink-0 flex-col border-l border-[#555]">
          <div className="flex h-[20px] shrink-0 bg-[#a0a0a0]">
            <div className="flex w-[202px] items-center border-r border-[#777] bg-[#d8d8d8] pl-[9px] font-['Open_Sans'] text-[11px] font-bold text-[#333]">
              <span className="w-[170px] whitespace-nowrap tracking-[-0.25px]">bfeq source (sothink'ddddd).fla*</span>
              <Svg w={7} h={7} className="ml-[9px]">
                <path d="m1 1 5 5M6 1 1 6" stroke="#333" strokeWidth="1.400" />
              </Svg>
            </div>
            <div className="flex-1 border-b border-[#777]" />
          </div>
          <EditBar />
          <Stage />
          <div className="h-[17px] shrink-0 bg-[#efefef] pl-[203px] pt-[8px]">
            <div className="h-[2px] w-[211px] bg-[#7c7c7c]" />
          </div>
          <Timeline />
        </div>
        <Dock />
        <div className="w-px bg-[#aaa]" />
        <Library />
        <Tools />
      </div>
      <Taskbar />
      <div className="absolute left-[1px] top-[677px] flex h-[29px] w-[44px] items-center justify-center rounded-[4px] bg-[#2c2c2c] font-['Open_Sans'] text-[12px] tracking-[-0.2px] text-white">
        Start
      </div>
    </div>
  );
}
